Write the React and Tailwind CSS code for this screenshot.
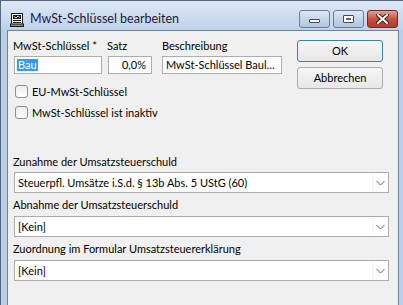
import React from 'react';

const font = { fontFamily: 'Lato, "Liberation Sans", Arial, sans-serif' };

function Checkbox({ label }) {
  return (
    <div className="flex items-center h-[13px]">
      <div className="w-[13px] h-[13px] rounded-[3px] border border-[#8e8f8f] bg-gradient-to-b from-[#ececec] to-[#ffffff]" />
      <span className="ml-[4px] text-[11px] leading-[16px] text-black whitespace-nowrap">{label}</span>
    </div>
  );
}

function Combo({ value, className = '' }) {
  return (
    <div className={`flex items-center w-[375px] h-[21px] ml-[6px] border border-[#acacac] bg-white ${className}`}>
      <span className="flex-1 pl-[3px] text-[11px] leading-[16px] text-black whitespace-nowrap overflow-hidden">{value}</span>
      <div className="w-[16px] h-full flex items-center justify-center border-l border-[#f3f3f3]">
        <svg width="9" height="6" viewBox="0 0 9 6">
          <path d="M0.5 1 L4.5 5 L8.5 1" fill="none" stroke="#5c5c5c" strokeWidth="1" />
        </svg>
      </div>
    </div>
  );
}

function WinButton({ kind }) {
  if (kind === 'close') {
    return (
      <div className="w-[31px] h-[18px] rounded-[3px] border border-[#6d2b2b] bg-gradient-to-b from-[#e3a093] via-[#c9503f] to-[#b33a2c] flex items-center justify-center">
        <svg width="13" height="10" viewBox="0 0 13 10">
          <path d="M2 1 L11 9 M11 1 L2 9" stroke="#3c1f1f" strokeWidth="4" strokeLinecap="square" />
          <path d="M2 1 L11 9 M11 1 L2 9" stroke="#ffffff" strokeWidth="2" strokeLinecap="square" />
        </svg>
      </div>
    );
  }
  return (
    <div className="w-[31px] h-[18px] rounded-[3px] border border-[#6b7d93] bg-gradient-to-b from-[#dfe9f4] via-[#c4d5e8] to-[#b2c6de] flex items-center justify-center">
      {kind === 'min' ? (
        <div className="w-[11px] h-[4px] mt-[4px] bg-white border border-[#3f4a57] rounded-[1px]" />
      ) : (
        <div className="w-[11px] h-[8px] bg-white border border-[#3f4a57] rounded-[1px] flex items-center justify-center">
          <div className="w-[5px] h-[2px] bg-[#5b6878]" />
        </div>
      )}
    </div>
  );
}

export default function App() {
  return (
    <div className="w-[403px] h-[305px] overflow-hidden bg-[#b9cfe7] border-l border-t border-[#56687f]" style={font}>
      {/* title bar */}
      <div className="h-[29px] flex items-start bg-gradient-to-b from-[#dde8f4] to-[#bdd2ea]">
        <div className="ml-[9px] mt-[12px]">
          <svg width="15" height="14" viewBox="0 0 15 14">
            <rect x="1.5" y="0.5" width="11" height="12" fill="#ffffff" stroke="#1a1a1a" />
            <rect x="3" y="2" width="8" height="4" fill="#1a1a1a" />
            <path d="M4 3.5 L6 5 L8 3 L10 4.5" stroke="#ffffff" strokeWidth="0.8" fill="none" />
            <path d="M3 7.5 H11 M3 9.5 H11" stroke="#1a1a1a" strokeWidth="1" />
            <rect x="0.5" y="11" width="13" height="2.5" fill="#8a8a8a" stroke="#1a1a1a" />
          </svg>
        </div>
        <span className="ml-[5px] mt-[10px] text-[12.5px] leading-[16px] text-[#1e1a40]">MwSt-Schlüssel bearbeiten</span>
        <div className="ml-auto mr-[5px] mt-[9px] flex gap-[3px]">
          <WinButton kind="min" />
          <WinButton kind="max" />
          <WinButton kind="close" />
        </div>
      </div>

      {/* client */}
      <div className="ml-[6px] w-[392px] h-[280px] border border-[#6e829b] bg-[#f0f0f0]">
        <div className="flex">
          <div className="flex-1">
            <div className="flex mt-[7px] text-[11px] leading-[16px] text-black whitespace-nowrap">
              <div className="ml-[5px] w-[94px]">
                <div>MwSt-Schlüssel *</div>
                <div className="mt-[2px] ml-[1px] w-[88px] h-[18px] border border-[#abadb3] bg-white flex items-center pl-[2px]">
                  <span className="bg-[#3399ff] text-white leading-[12px] px-[1px]">Bau</span>
                </div>
              </div>
              <div className="w-[55px]">
                <div>Satz</div>
                <div className="mt-[2px] ml-[1px] w-[44px] h-[18px] border border-[#abadb3] bg-white flex items-center justify-end pr-[5px]">0,0%</div>
              </div>
              <div>
                <div>Beschreibung</div>
                <div className="mt-[2px] w-[120px] h-[18px] border border-[#abadb3] bg-white flex items-center pl-[3px] pr-[2px]">
                  <span className="truncate">MwSt-Schlüssel Baul…</span>
                </div>
              </div>
            </div>
            <div className="ml-[7px] mt-[11px] flex flex-col gap-[8px]">
              <Checkbox label="EU-MwSt-Schlüssel" />
              <Checkbox label="MwSt-Schlüssel ist inaktiv" />
            </div>
          </div>
          <div className="mr-[15px] mt-[9px] flex flex-col gap-[5px] text-[11px] text-black">
            <div className="w-[86px] h-[22px] rounded-[3px] border border-[#3c7fb1] bg-gradient-to-b from-[#f6f6f6] to-[#e7e7e7] flex items-center justify-center">OK</div>
            <div className="w-[86px] h-[22px] rounded-[3px] border border-[#acacac] bg-gradient-to-b from-[#f6f6f6] to-[#e7e7e7] flex items-center justify-center">Abbrechen</div>
          </div>
        </div>

        <div className="mt-[35px] ml-[5px] text-[11px] leading-[16px] text-black">Zunahme der Umsatzsteuerschuld</div>
        <Combo className="mt-[2px]" value="Steuerpfl. Umsätze i.S.d. § 13b Abs. 5 UStG (60)" />
        <div className="mt-[4px] ml-[5px] text-[11px] leading-[16px] text-black">Abnahme der Umsatzsteuerschuld</div>
        <Combo className="mt-[3px]" value="[Kein]" />
        <div className="mt-[4px] ml-[5px] text-[11px] leading-[16px] text-black">Zuordnung im Formular Umsatzsteuererklärung</div>
        <Combo className="mt-[3px]" value="[Kein]" />
      </div>
    </div>
  );
}
